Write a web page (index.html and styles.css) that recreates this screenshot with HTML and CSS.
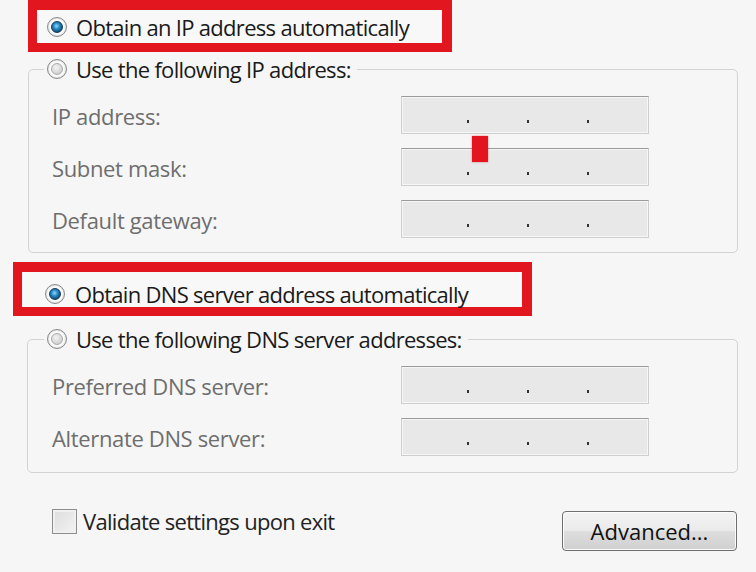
FILE: index.html
```html
<!DOCTYPE html>
<html>
<head>
<meta charset="utf-8">
<link rel="stylesheet" href="styles.css">
</head>
<body>
<div class="dialog">
  <div class="highlight hl-ip">
    <span class="radio checked"></span>
    <span class="opt">Obtain an IP address automatically</span>
  </div>

  <fieldset class="group group-ip">
    <legend><span class="radio"></span><span class="opt">Use the following IP address:</span></legend>
    <div class="rows">
      <span class="label">IP address:</span>
      <div class="ipbox"><i></i><i></i><i></i></div>
      <span class="label">Subnet mask:</span>
      <div class="ipbox"><span class="marker"></span><i></i><i></i><i></i></div>
      <span class="label">Default gateway:</span>
      <div class="ipbox"><i></i><i></i><i></i></div>
    </div>
  </fieldset>

  <div class="highlight hl-dns">
    <span class="radio checked"></span>
    <span class="opt">Obtain DNS server address automatically</span>
  </div>

  <fieldset class="group group-dns">
    <legend><span class="radio"></span><span class="opt">Use the following DNS server addresses:</span></legend>
    <div class="rows">
      <span class="label">Preferred DNS server:</span>
      <div class="ipbox"><i></i><i></i><i></i></div>
      <span class="label">Alternate DNS server:</span>
      <div class="ipbox"><i></i><i></i><i></i></div>
    </div>
  </fieldset>

  <div class="footer">
    <label class="check"><span class="box"></span><span class="opt">Validate settings upon exit</span></label>
    <button class="btn">Advanced...</button>
  </div>
</div>
</body>
</html>
```

FILE: styles.css
```css
html, body {
  margin: 0;
  padding: 0;
}
body {
  width: 756px;
  height: 572px;
  overflow: hidden;
  background: #f6f6f6;
  font-family: "Open Sans", "Noto Sans", sans-serif;
  font-size: 22px;
  color: #1a1a1a;
}
.dialog {
  display: flex;
  flex-direction: column;
  align-items: flex-start;
}
.opt {
  line-height: 26px;
  white-space: nowrap;
  letter-spacing: -0.7px;
}

/* highlight boxes */
.highlight {
  box-sizing: border-box;
  display: flex;
  border-style: solid;
  border-color: #e2161f;
  background: #f8f8f8;
}
.hl-ip {
  margin-left: 28px;
  width: 424px;
  height: 52px;
  border-width: 10px 10px 9px 9px;
  align-items: center;
  padding-left: 10px;
  gap: 9px;
}
.hl-dns {
  margin-top: 9px;
  margin-left: 13px;
  width: 519px;
  height: 54px;
  border-width: 10px 10px 9px 9px;
  align-items: flex-end;
  padding-left: 23px;
  padding-bottom: 0;
  gap: 10px;
}

/* radio buttons */
.radio {
  box-sizing: border-box;
  flex: none;
  width: 20px;
  height: 20px;
  border-radius: 50%;
  border: 1px solid #8a8a8a;
  background: radial-gradient(circle, #fdfdfd 0 7px, #e0e0e0 9px);
  display: inline-flex;
  align-items: center;
  justify-content: center;
  vertical-align: middle;
}
.radio::after {
  content: "";
  box-sizing: border-box;
  width: 12px;
  height: 12px;
  border-radius: 50%;
  border: 1px solid #aaaaaa;
  background: radial-gradient(circle at 40% 35%, #f3f3f3 0, #d2d2d2 70%, #bdbdbd 100%);
}
.radio.checked::after {
  border: 1px solid #123a5c;
  background: radial-gradient(circle at 45% 40%, #8fdcff 0, #2a8fcc 35%, #15527f 70%, #0e3556 100%);
}
.hl-dns .radio {
  margin-bottom: 3px;
}

/* group boxes */
.group {
  box-sizing: border-box;
  margin: 0;
  padding: 0;
  border: 1px solid #d3d3d3;
  border-radius: 5px;
  min-width: 0;
}
.group legend {
  display: flex;
  align-items: center;
  gap: 9px;
  padding: 0 6px 0 3px;
  height: 26px;
}
.group-ip {
  margin-top: 4px;
  margin-left: 28px;
  width: 710px;
}
.group-dns {
  margin-top: 10px;
  margin-left: 27px;
  width: 711px;
}
.group-ip legend {
  margin-left: 15px;
}
.group-dns legend {
  margin-left: 16px;
}
.rows {
  display: grid;
  grid-template-columns: 349px 248px;
  grid-auto-rows: 38px;
  row-gap: 14px;
  align-items: center;
}
.group-ip .rows {
  padding: 14px 0 14px 23px;
}
.group-dns .rows {
  padding: 14px 0 16px 24px;
}
.label {
  color: #6e6e6e;
  line-height: 26px;
  white-space: nowrap;
  margin-top: 2px;
  letter-spacing: -0.35px;
}

/* ip address boxes */
.ipbox {
  position: relative;
  box-sizing: border-box;
  height: 38px;
  border: 1px solid #cfcfcf;
  border-top-color: #9a9a9a;
  box-shadow: inset 0 0 0 1px #f6f6f6;
  background: #e8e8e8;
  display: flex;
  align-items: flex-end;
  padding: 0 0 10px 65px;
  gap: 58px;
}
.ipbox i {
  display: block;
  width: 2px;
  height: 3px;
  background: #333;
}
.marker {
  position: absolute;
  left: 70px;
  top: -13px;
  width: 16px;
  height: 26px;
  background: #e3141d;
  box-shadow: 0 0 2px rgba(227, 20, 29, 0.5);
}

/* footer */
.footer {
  display: flex;
  align-items: flex-start;
  width: 756px;
  box-sizing: border-box;
  padding-left: 52px;
  padding-right: 19px;
  margin-top: 35px;
}
.check {
  display: flex;
  align-items: center;
  gap: 6px;
  color: #222;
}
.check .box {
  box-sizing: border-box;
  width: 25px;
  height: 25px;
  border: 1px solid #8f8f8f;
  background: linear-gradient(135deg, #dcdcdc, #f4f4f4);
  box-shadow: inset 0 0 0 2px #f0f0f0;
}
.btn {
  margin-left: auto;
  margin-top: 3px;
  width: 175px;
  height: 40px;
  box-sizing: border-box;
  border: 1px solid #6e6e6e;
  border-radius: 4px;
  background: linear-gradient(#f3f3f3 0, #ebebeb 48%, #dddddd 52%, #d0d0d0 100%);
  box-shadow: inset 0 0 0 1px #fbfbfb;
  font-family: "Open Sans", "Noto Sans", sans-serif;
  font-size: 22px;
  color: #111;
  padding: 0;
  line-height: 26px;
}
```
